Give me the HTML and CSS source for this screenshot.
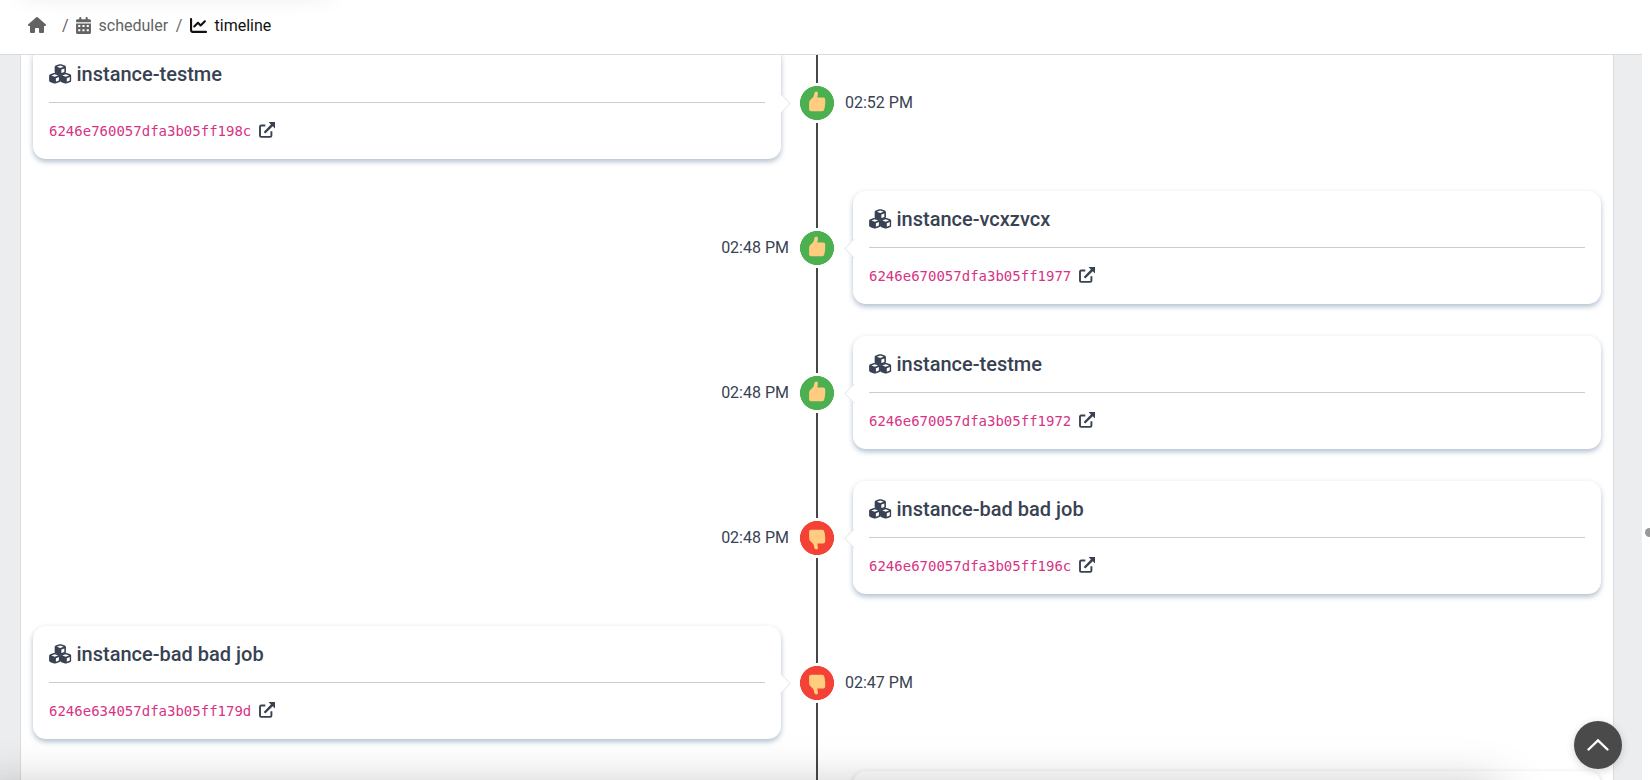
FILE: index.html
```html
<!DOCTYPE html>
<html lang="en">
<head>
<meta charset="utf-8">
<title>timeline</title>
<link rel="stylesheet" href="styles.css">
</head>
<body>
<svg class="defs" aria-hidden="true">
  <symbol id="cube" viewBox="0 0 12 11"><path fill-rule="evenodd" d="M5 .3Q6 0 7 .3L10.600 1.500Q11.700 2 11.700 3V7.900Q11.700 8.900 10.800 9.300L7 10.800Q6 11.100 5 10.800L1.200 9.300Q.3 8.900 .3 7.900V3Q.3 2 1.400 1.500ZM6 1.600L2.600 2.800L6 4.100L9.400 2.800ZM7.100 5.600V9.100L10.100 7.900V4.400Z"/></symbol>
  <symbol id="cubes" viewBox="0 0 22.500 20"><use href="#cube" x="5.250" y="0" width="12" height="11"/><use href="#cube" x="-.2" y="8.700" width="12" height="11"/><use href="#cube" x="10.700" y="8.700" width="12" height="11"/></symbol>
  <symbol id="open" viewBox="0 0 16 16"><path d="M6.300 3.500H2.200Q1 3.500 1 4.700V13.700Q1 14.900 2.200 14.900H11.200Q12.400 14.900 12.400 13.700V9.300" fill="none" stroke="currentColor" stroke-width="1.900"/><path d="M9.600 0H16V6.400L13.800 4.300L6.300 11.500L4.700 9.900L11.900 2.400Z"/></symbol>
  <symbol id="thumb" viewBox="0 0 18 21"><path d="M7.600 .7C9.200 .2 10.200 1.300 9.900 3L9.300 6.600H15.500Q17.300 6.700 17.200 8.500V12.500Q16.900 17 16 19.300Q15.400 20.300 14 20.300H3Q1.200 20.300 1.100 18.500V12Q1 9.800 2.700 8.500L5.500 5.800L6.400 2Q6.700 .9 7.600 .7Z"/></symbol>
</svg>

<header class="topbar">
  <nav class="crumbs">
    <svg class="home" viewBox="0 0 576 512"><path d="M575.800 255.500c0 18-15 32.100-32 32.100h-32l.7 160.200c0 2.700-.2 5.400-.5 8.100V472c0 22.100-17.900 40-40 40H392c-22.100 0-40-17.900-40-40V384c0-17.700-14.300-32-32-32H256c-17.700 0-32 14.300-32 32v88c0 22.100-17.900 40-40 40H104c-22.100 0-40-17.900-40-40V287.600H32c-18 0-32-14-32-32.100c0-9 3-17 10-24L266.400 8c7-7 15-8 22-8s15 2 21 7L564.800 231.500c8 7 12 15 11 24z"/></svg>
    <span class="slash first">/</span>
    <svg class="cal" viewBox="0 0 448 512"><path fill-rule="evenodd" d="M128 0c17.700 0 32 14.300 32 32V64H288V32c0-17.700 14.300-32 32-32s32 14.300 32 32V64h48c26.500 0 48 21.500 48 48v48H0V112C0 85.500 21.500 64 48 64H96V32c0-17.700 14.300-32 32-32zM0 192H448V464c0 26.500-21.500 48-48 48H48c-26.500 0-48-21.500-48-48V192zM64 240v64h64v-64zM192 240v64h64v-64zM320 240v64h64v-64zM64 368v64h64v-64zM192 368v64h64v-64zM320 368v64h64v-64z"/></svg>
    <span class="link">scheduler</span>
    <span class="slash">/</span>
    <svg class="chart" viewBox="0 0 512 512"><path d="M64 64c0-17.700-14.300-32-32-32S0 46.300 0 64V400c0 44.200 35.800 80 80 80H480c17.700 0 32-14.300 32-32s-14.300-32-32-32H80c-8.800 0-16-7.200-16-16V64zm406.600 86.600c12.500-12.500 12.500-32.800 0-45.300s-32.800-12.500-45.300 0L320 210.700l-57.400-57.400c-12.500-12.500-32.800-12.500-45.300 0l-112 112c-12.500 12.500-12.500 32.800 0 45.300s32.800 12.500 45.300 0L240 221.300l57.400 57.400c12.500 12.500 32.800 12.500 45.300 0l128-128z"/></svg>
    <span class="current">timeline</span>
  </nav>
</header>

<main class="page">
  <section class="timeline">
    <article class="row left">
      <div class="card"><h5><svg class="cubes"><use href="#cubes"/></svg>instance-testme</h5><hr><p><code>6246e760057dfa3b05ff198c</code><svg class="open"><use href="#open"/></svg></p></div>
      <div class="axis"><span class="dot ok"><svg><use href="#thumb"/></svg></span></div>
      <time>02:52 PM</time>
    </article>
    <article class="row right">
      <time>02:48 PM</time>
      <div class="axis"><span class="dot ok"><svg><use href="#thumb"/></svg></span></div>
      <div class="card"><h5><svg class="cubes"><use href="#cubes"/></svg>instance-vcxzvcx</h5><hr><p><code>6246e670057dfa3b05ff1977</code><svg class="open"><use href="#open"/></svg></p></div>
    </article>
    <article class="row right">
      <time>02:48 PM</time>
      <div class="axis"><span class="dot ok"><svg><use href="#thumb"/></svg></span></div>
      <div class="card"><h5><svg class="cubes"><use href="#cubes"/></svg>instance-testme</h5><hr><p><code>6246e670057dfa3b05ff1972</code><svg class="open"><use href="#open"/></svg></p></div>
    </article>
    <article class="row right">
      <time>02:48 PM</time>
      <div class="axis"><span class="dot bad"><svg><use href="#thumb"/></svg></span></div>
      <div class="card"><h5><svg class="cubes"><use href="#cubes"/></svg>instance-bad bad job</h5><hr><p><code>6246e670057dfa3b05ff196c</code><svg class="open"><use href="#open"/></svg></p></div>
    </article>
    <article class="row left">
      <div class="card"><h5><svg class="cubes"><use href="#cubes"/></svg>instance-bad bad job</h5><hr><p><code>6246e634057dfa3b05ff179d</code><svg class="open"><use href="#open"/></svg></p></div>
      <div class="axis"><span class="dot bad"><svg><use href="#thumb"/></svg></span></div>
      <time>02:47 PM</time>
    </article>
    <article class="row right">
      <time></time>
      <div class="axis"></div>
      <div class="card"></div>
    </article>
  </section>
</main>

<div class="glows"><div class="glow glow-top"></div><div class="glow glow-bottom"></div></div>
<button class="to-top" aria-label="Back to top"><svg viewBox="0 0 24 14"><path d="M2.500 11.500L12 2.500L21.500 11.500"/></svg></button>
<div class="scroll-track"><div class="scroll-thumb"></div></div>
</body>
</html>
```
FILE: styles.css
```css
* { box-sizing: border-box; }
body {
  margin: 0;
  height: 780px;
  display: flex;
  flex-direction: column;
  overflow: hidden;
  background: #fff;
  color: #384252;
  font: 16px/24px Roboto, sans-serif;
}
svg { display: block; fill: currentColor; flex: none; }
.defs { position: absolute; width: 0; height: 0; }

.topbar {
  flex: none;
  width: 1642px;
  height: 55px;
  padding: 14px 28px 0;
  border-bottom: 1px solid #d8dbe0;
  background: #fff;
}
.crumbs { display: flex; align-items: center; color: #636363; }
.crumbs svg { margin-top: -2px; }
.home { width: 18px; height: 16px; }
.slash { width: 22px; text-align: center; }
.slash.first { width: 6px; margin: 0 8px 0 16px; }
.cal { width: 15px; height: 17px; margin-right: 7.5px; }
.link { width: 69.5px; }
.chart { width: 17px; height: 17px; color: #111; margin-right: 7.5px; }
.current { color: #111; }

.page {
  flex: 1;
  min-height: 0;
  width: 1642px;
  padding: 0 28px 0 20px;
  background: #ebedef;
  overflow: hidden;
}
.timeline {
  height: 100%;
  padding: 0 12px;
  background: #fff;
  border: solid #d8dbe0;
  border-width: 0 1px;
  overflow: hidden;
}
.row {
  display: grid;
  grid-template-columns: 748px 72px 748px;
  align-items: center;
  height: 145px;
}
.row:first-child { margin-top: -25px; }
.axis {
  height: 100%;
  display: grid;
  place-items: center;
  background: linear-gradient(#474747, #474747) center / 2px 100% no-repeat;
}
.dot {
  width: 40px;
  height: 40px;
  border: 3px solid #fff;
  display: grid;
  place-items: center;
  background: radial-gradient(circle, #4caf50 16.7px, #fff 17.3px);
  color: #ffcc80;
}
.dot svg { width: 18px; height: 21px; margin-top: -3px; }
.dot.bad { background: radial-gradient(circle, #f44336 16.7px, #fff 17.3px); }
.dot.bad svg { transform: scaleY(-1); margin: 3px 0 0; }
.left time { margin-left: -8px; }
.right time { margin-right: -8px; text-align: right; }

.card {
  position: relative;
  height: 113px;
  padding: 16px;
  border-radius: 13px;
  background: #fff;
  box-shadow: 0 3px 5px rgba(65, 100, 135, .34), 0 1px 6px rgba(65, 100, 135, .08);
}
.card::after {
  content: "";
  position: absolute;
  top: 50px;
  width: 13px;
  height: 13px;
  background: #fff;
  border: 1px solid #dfe3e9;
  transform: rotate(45deg);
}
.left .card::after { right: -7px; clip-path: polygon(0 0, 100% 0, 100% 100%); }
.right .card::after { left: -6px; clip-path: polygon(0 0, 0 100%, 100% 100%); }
.card:empty::after { display: none; }
h5 {
  margin: 0;
  display: flex;
  align-items: center;
  gap: 5px;
  height: 24px;
  font-size: 20px;
  line-height: 24px;
  font-weight: 500;
}
.cubes { width: 22.5px; height: 20px; margin-top: -1px; }
hr { margin: 16px 0; border: 0; height: 1px; background: #c9ccd0; }
p { margin: 0; display: flex; align-items: center; gap: 8px; }
code { color: #d63384; font: 14px/24px "DejaVu Sans Mono", monospace; }
.open { width: 16px; height: 16px; margin-top: -2px; }

.glows { position: absolute; inset: 0; overflow: hidden; pointer-events: none; }
.glow { position: absolute; }
.glow-top { left: 20px; top: -28px; width: 310px; height: 18px; box-shadow: 0 0 28px rgba(0, 0, 0, .14); }
.glow-bottom { left: -20px; top: 788px; width: 1520px; height: 60px; box-shadow: 0 0 48px rgba(0, 0, 0, .26); }
.to-top {
  position: absolute;
  left: 1574px;
  top: 721px;
  width: 48px;
  height: 48px;
  padding: 0;
  border: 0;
  border-radius: 50%;
  display: grid;
  place-items: center;
  background: #4a4a4a;
  box-shadow: 0 2px 8px rgba(0, 0, 0, .16);
}
.to-top svg { width: 24px; height: 14px; fill: none; stroke: #fff; stroke-width: 2.4; stroke-linecap: round; }
.scroll-track {
  position: absolute;
  top: 0;
  right: 0;
  width: 5px;
  height: 780px;
  padding-top: 528px;
  overflow: hidden;
}
.scroll-thumb { width: 9px; height: 9px; border-radius: 5px; background: #999; }
```
